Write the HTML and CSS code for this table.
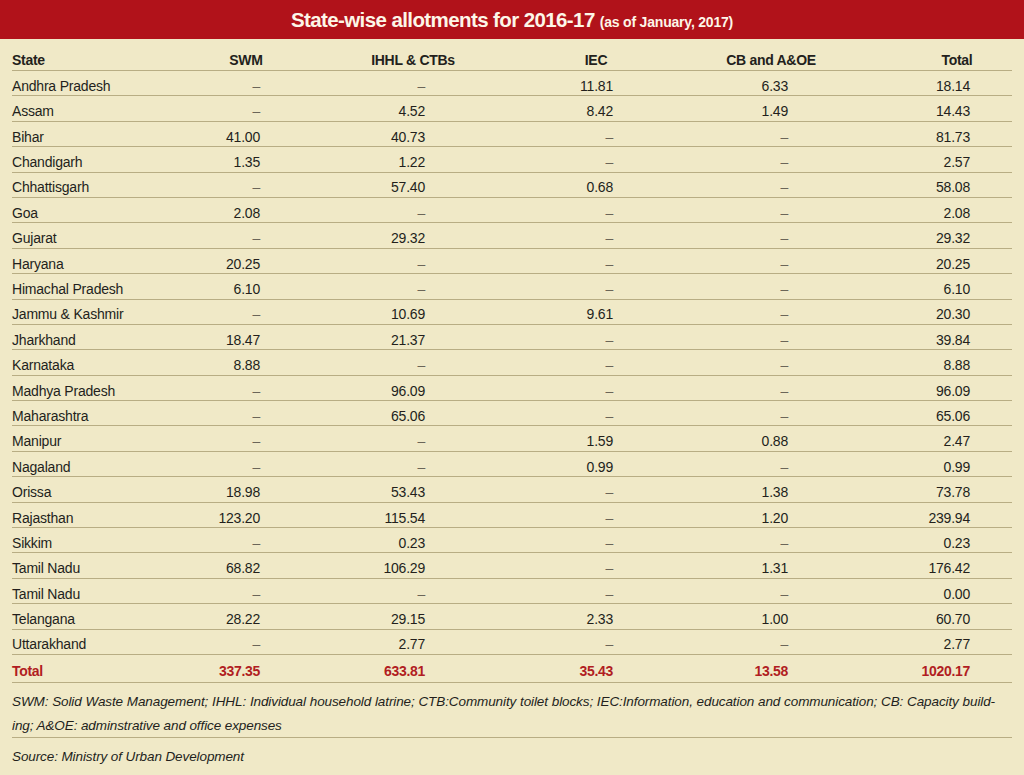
FILE: index.html
```html
<!DOCTYPE html>
<html lang="en">
<head>
<meta charset="utf-8">
<title>State-wise allotments for 2016-17</title>
<link rel="stylesheet" href="styles.css">
</head>
<body>
<header class="band"><h1 class="title">State-wise allotments for 2016-17 <span class="sub">(as of January, 2017)</span></h1></header>
<main class="sheet">
  <div class="row head"><div class="st">State</div><div class="c1">SWM</div><div class="c2">IHHL &amp; CTBs</div><div class="c3">IEC</div><div class="c4">CB and A&amp;OE</div><div class="c5">Total</div></div>
  <div class="row"><div class="st">Andhra Pradesh</div><div class="c1 d">–</div><div class="c2 d">–</div><div class="c3">11.81</div><div class="c4">6.33</div><div class="c5">18.14</div></div>
  <div class="row"><div class="st">Assam</div><div class="c1 d">–</div><div class="c2">4.52</div><div class="c3">8.42</div><div class="c4">1.49</div><div class="c5">14.43</div></div>
  <div class="row"><div class="st">Bihar</div><div class="c1">41.00</div><div class="c2">40.73</div><div class="c3 d">–</div><div class="c4 d">–</div><div class="c5">81.73</div></div>
  <div class="row"><div class="st">Chandigarh</div><div class="c1">1.35</div><div class="c2">1.22</div><div class="c3 d">–</div><div class="c4 d">–</div><div class="c5">2.57</div></div>
  <div class="row"><div class="st">Chhattisgarh</div><div class="c1 d">–</div><div class="c2">57.40</div><div class="c3">0.68</div><div class="c4 d">–</div><div class="c5">58.08</div></div>
  <div class="row"><div class="st">Goa</div><div class="c1">2.08</div><div class="c2 d">–</div><div class="c3 d">–</div><div class="c4 d">–</div><div class="c5">2.08</div></div>
  <div class="row"><div class="st">Gujarat</div><div class="c1 d">–</div><div class="c2">29.32</div><div class="c3 d">–</div><div class="c4 d">–</div><div class="c5">29.32</div></div>
  <div class="row"><div class="st">Haryana</div><div class="c1">20.25</div><div class="c2 d">–</div><div class="c3 d">–</div><div class="c4 d">–</div><div class="c5">20.25</div></div>
  <div class="row"><div class="st">Himachal Pradesh</div><div class="c1">6.10</div><div class="c2 d">–</div><div class="c3 d">–</div><div class="c4 d">–</div><div class="c5">6.10</div></div>
  <div class="row"><div class="st">Jammu &amp; Kashmir</div><div class="c1 d">–</div><div class="c2">10.69</div><div class="c3">9.61</div><div class="c4 d">–</div><div class="c5">20.30</div></div>
  <div class="row"><div class="st">Jharkhand</div><div class="c1">18.47</div><div class="c2">21.37</div><div class="c3 d">–</div><div class="c4 d">–</div><div class="c5">39.84</div></div>
  <div class="row"><div class="st">Karnataka</div><div class="c1">8.88</div><div class="c2 d">–</div><div class="c3 d">–</div><div class="c4 d">–</div><div class="c5">8.88</div></div>
  <div class="row"><div class="st">Madhya Pradesh</div><div class="c1 d">–</div><div class="c2">96.09</div><div class="c3 d">–</div><div class="c4 d">–</div><div class="c5">96.09</div></div>
  <div class="row"><div class="st">Maharashtra</div><div class="c1 d">–</div><div class="c2">65.06</div><div class="c3 d">–</div><div class="c4 d">–</div><div class="c5">65.06</div></div>
  <div class="row"><div class="st">Manipur</div><div class="c1 d">–</div><div class="c2 d">–</div><div class="c3">1.59</div><div class="c4">0.88</div><div class="c5">2.47</div></div>
  <div class="row"><div class="st">Nagaland</div><div class="c1 d">–</div><div class="c2 d">–</div><div class="c3">0.99</div><div class="c4 d">–</div><div class="c5">0.99</div></div>
  <div class="row"><div class="st">Orissa</div><div class="c1">18.98</div><div class="c2">53.43</div><div class="c3 d">–</div><div class="c4">1.38</div><div class="c5">73.78</div></div>
  <div class="row"><div class="st">Rajasthan</div><div class="c1">123.20</div><div class="c2">115.54</div><div class="c3 d">–</div><div class="c4">1.20</div><div class="c5">239.94</div></div>
  <div class="row"><div class="st">Sikkim</div><div class="c1 d">–</div><div class="c2">0.23</div><div class="c3 d">–</div><div class="c4 d">–</div><div class="c5">0.23</div></div>
  <div class="row"><div class="st">Tamil Nadu</div><div class="c1">68.82</div><div class="c2">106.29</div><div class="c3 d">–</div><div class="c4">1.31</div><div class="c5">176.42</div></div>
  <div class="row"><div class="st">Tamil Nadu</div><div class="c1 d">–</div><div class="c2 d">–</div><div class="c3 d">–</div><div class="c4 d">–</div><div class="c5">0.00</div></div>
  <div class="row"><div class="st">Telangana</div><div class="c1">28.22</div><div class="c2">29.15</div><div class="c3">2.33</div><div class="c4">1.00</div><div class="c5">60.70</div></div>
  <div class="row"><div class="st">Uttarakhand</div><div class="c1 d">–</div><div class="c2">2.77</div><div class="c3 d">–</div><div class="c4 d">–</div><div class="c5">2.77</div></div>
  <div class="row total"><div class="st">Total</div><div class="c1">337.35</div><div class="c2">633.81</div><div class="c3">35.43</div><div class="c4">13.58</div><div class="c5">1020.17</div></div>
  <div class="notes">
    <div class="just">SWM: Solid Waste Management; IHHL: Individual household latrine; CTB:Community toilet blocks; IEC:Information, education and communication; CB: Capacity build-</div>
    <div>ing; A&amp;OE: adminstrative and office expenses</div>
  </div>
  <div class="source">Source: Ministry of Urban Development</div>
</main>
</body>
</html>
```

FILE: styles.css
```css
html, body {
  margin: 0;
  padding: 0;
}
body {
  background: #f0e9c7;
  color: #231f1c;
  font-family: "Liberation Sans", Arial, sans-serif;
  font-size: 14px;
  width: 1024px;
  height: 775px;
  overflow: hidden;
}
.band {
  background: #b1121a;
  height: 39px;
  box-sizing: border-box;
  padding-top: 8px;
  display: flex;
  justify-content: center;
}
.title {
  margin: 0;
  font-size: 20.5px;
  line-height: 23px;
  font-weight: bold;
  letter-spacing: -0.6px;
  color: #fdf6e8;
}
.sub {
  font-size: 14px;
  letter-spacing: -0.2px;
}
.sheet {
  padding: 0 12px;
}
.row {
  display: grid;
  grid-template-columns: 184px 100px 234px 132px 218px 132px;
  align-items: end;
  height: 25.4px;
  box-sizing: border-box;
  border-bottom: 1px solid #b8ad84;
  padding-bottom: 1.5px;
  line-height: 16px;
  letter-spacing: -0.2px;
}
.row > div {
  white-space: nowrap;
}
.c1, .c2, .c3, .c4, .c5 {
  text-align: right;
}
.c1 { padding-right: 36px; }
.c2 { padding-right: 105px; }
.c3 { padding-right: 49px; }
.c4 { padding-right: 92px; }
.c5 { padding-right: 42px; }
.d {
  color: #6b6558;
}
.head {
  height: 32px;
  padding-bottom: 2px;
  font-weight: bold;
  letter-spacing: -0.3px;
}
.head > div {
  text-align: center;
  padding-right: 0;
}
.head > .st {
  text-align: left;
}
.head > .c5 {
  padding-left: 22px;
}
.total {
  height: 28px;
  padding-bottom: 2.5px;
  font-weight: bold;
  color: #b11d22;
  letter-spacing: -0.3px;
}
.notes {
  padding-top: 7px;
  border-bottom: 1px solid #b8ad84;
  font-style: italic;
  line-height: 24px;
  font-size: 13.5px;
  height: 55px;
  box-sizing: border-box;
  letter-spacing: -0.1px;
}
.just {
  margin-right: 17px;
  text-align: justify;
  text-align-last: justify;
}
.source {
  padding-top: 7px;
  font-style: italic;
  line-height: 24px;
  font-size: 13.5px;
  letter-spacing: -0.1px;
}
```
